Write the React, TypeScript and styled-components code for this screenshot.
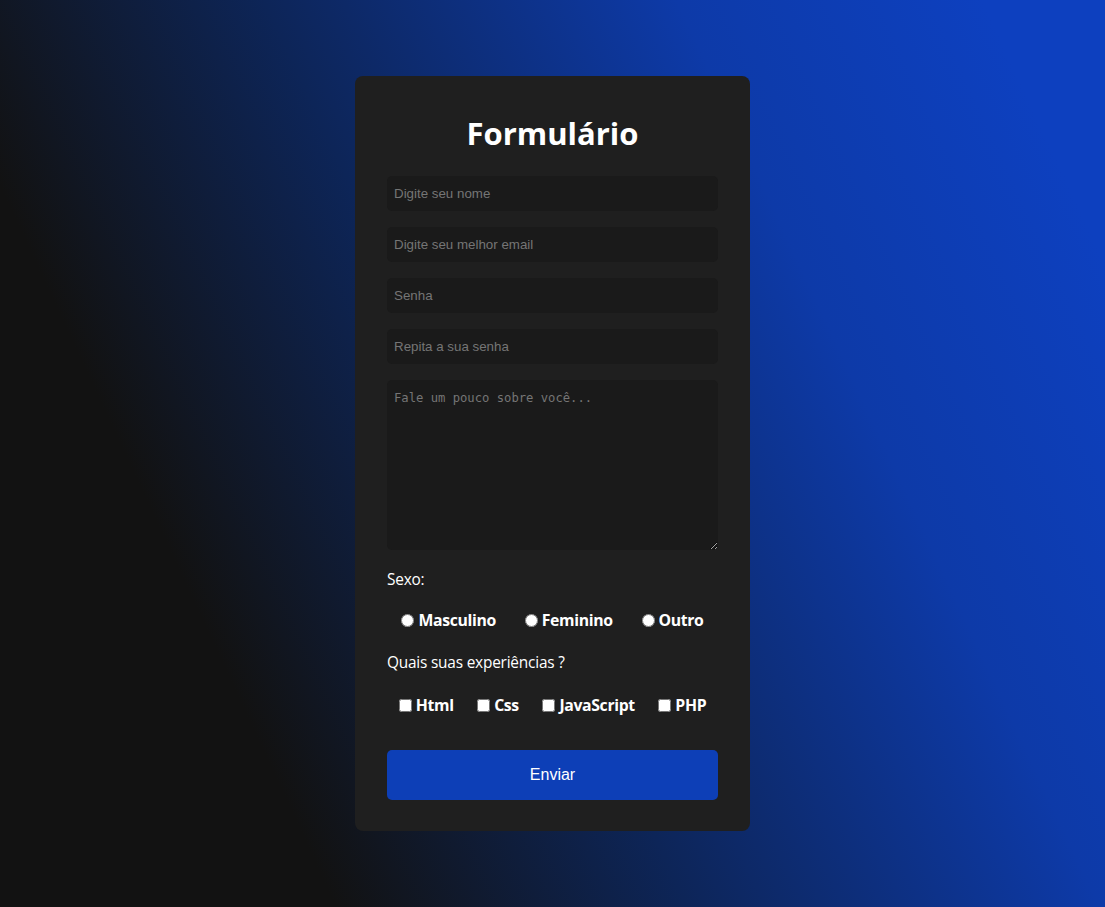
import React from "react";
import styled, { createGlobalStyle } from "styled-components";

const GlobalStyle = createGlobalStyle`
  html, body { margin: 0; padding: 0; }
  body {
    min-height: 100vh;
    background-image: linear-gradient(65deg, #121212 22%, #0d2558 45%, #0d3aa8 72%, #0d40bf 92%);
    font-family: "Open Sans", "Noto Sans", sans-serif;
  }
  * { box-sizing: border-box; }
`;

const Page = styled.div`
  min-height: 100vh;
  display: flex;
  align-items: center;
  justify-content: center;
`;

const Card = styled.form`
  width: 395px;
  background: #1f1f1f;
  border-radius: 8px;
  padding: 32px 32px 31px;
  display: flex;
  flex-direction: column;
  color: #fff;
`;

const Title = styled.h1`
  margin: 4px 0 22px;
  font-family: "Open Sans", sans-serif;
  font-weight: 700;
  font-size: 31px;
  line-height: 42px;
  text-align: center;
  color: #fff;
`;

const Fields = styled.div`
  display: flex;
  flex-direction: column;
  gap: 16px;
`;

const TextInput = styled.input`
  height: 35px;
  width: 100%;
  border: none;
  outline: none;
  border-radius: 5px;
  background: #1a1a1a;
  color: #ddd;
  padding: 0 7px;
  font-family: "Liberation Sans", Arial, sans-serif;
  font-size: 13.33px;
  &::placeholder { color: #757575; }
`;

const TextArea = styled.textarea`
  height: 170px;
  width: 100%;
  border: none;
  outline: none;
  border-radius: 5px;
  background: #1a1a1a;
  color: #ddd;
  padding: 11px 7px 8px;
  font-family: "DejaVu Sans Mono", monospace;
  font-size: 12.2px;
  resize: both;
  display: block;
  &::placeholder { color: #757575; }
`;

const SectionLabel = styled.p<{ $top: number }>`
  margin: ${(p) => p.$top}px 0 0;
  font-family: "Open Sans", sans-serif;
  font-size: 15.4px;
  line-height: 20px;
  letter-spacing: -0.2px;
  color: #fff;
`;

const OptionRow = styled.div<{ $top: number }>`
  margin-top: ${(p) => p.$top}px;
  height: 24px;
  display: flex;
  align-items: center;
  justify-content: space-around;
`;

const Option = styled.label`
  display: flex;
  align-items: center;
  font-family: "Open Sans", sans-serif;
  font-weight: 700;
  font-size: 15.8px;
  letter-spacing: -0.35px;
  color: #fff;
  input { margin: 0 4px 0 0; width: 13px; height: 13px; }
`;

const SubmitButton = styled.button`
  margin-top: 33px;
  height: 50px;
  width: 100%;
  border: none;
  border-radius: 5px;
  background: #0d3fb7;
  color: #fff;
  font-family: "Liberation Sans", Arial, sans-serif;
  font-size: 16px;
  cursor: pointer;
`;

export default function App() {
  return (
    <>
      <GlobalStyle />
      <Page>
        <Card onSubmit={(e) => e.preventDefault()}>
          <Title>Formulário</Title>
          <Fields>
            <TextInput type="text" placeholder="Digite seu nome" />
            <TextInput type="email" placeholder="Digite seu melhor email" />
            <TextInput type="password" placeholder="Senha" />
            <TextInput type="password" placeholder="Repita a sua senha" />
            <TextArea placeholder="Fale um pouco sobre você..." />
          </Fields>
          <SectionLabel $top={20}>Sexo:</SectionLabel>
          <OptionRow $top={18}>
            <Option><input type="radio" name="sexo" />Masculino</Option>
            <Option><input type="radio" name="sexo" />Feminino</Option>
            <Option><input type="radio" name="sexo" />Outro</Option>
          </OptionRow>
          <SectionLabel $top={21}>Quais suas experiências ?</SectionLabel>
          <OptionRow $top={20}>
            <Option><input type="checkbox" />Html</Option>
            <Option><input type="checkbox" />Css</Option>
            <Option><input type="checkbox" />JavaScript</Option>
            <Option><input type="checkbox" />PHP</Option>
          </OptionRow>
          <SubmitButton type="submit">Enviar</SubmitButton>
        </Card>
      </Page>
    </>
  );
}
